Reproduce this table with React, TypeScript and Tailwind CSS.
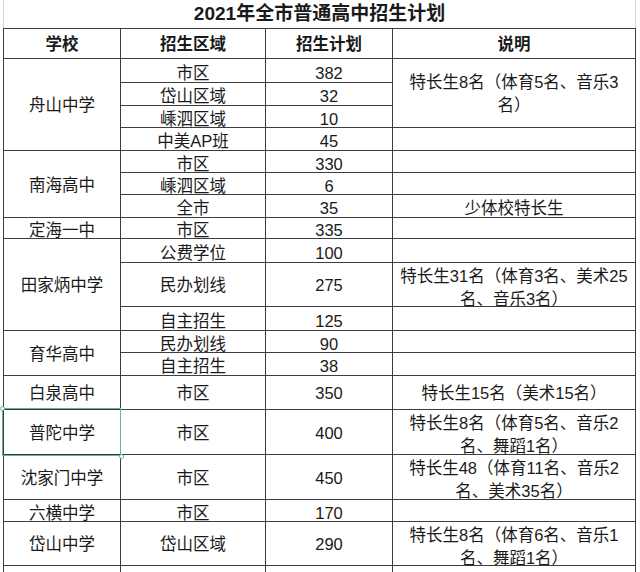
import type { ReactNode } from "react";

const FONT = { fontFamily: '"Liberation Sans", "Noto Sans CJK SC", sans-serif' };

// vertical nudge classes: text in the sheet sits a bit low in short rows
const MID = "pt-[2px]";
const LOW = "pt-[5px]";
const TWO = "pt-[6px]";

type CellProps = {
  children?: ReactNode;
  span?: string;
  pad?: string;
  bold?: boolean;
};

const Cell = ({ children, span = "", pad = MID, bold = false }: CellProps) => (
  <div
    className={`flex items-center justify-center overflow-hidden bg-white text-center whitespace-nowrap leading-[23px] text-[#1a1a1a] ${span} ${pad} ${
      bold ? "font-bold" : ""
    }`}
  >
    <span>{children}</span>
  </div>
);

export default function App() {
  return (
    <div className="relative h-[572px] w-[640px] overflow-hidden bg-white text-[16.5px]" style={FONT}>
      <div className="pl-[3px]">
        {/* title row */}
        <div className="flex h-[28px] w-[633px] items-center justify-center border-x border-[#d4d4d4] pt-[1px] text-[19px] font-bold text-[#1a1a1a]">
          2021年全市普通高中招生计划
        </div>

        {/* table */}
        <div className="grid w-[633px] grid-cols-[116px_144px_126px_242px] grid-rows-[29px_23px_22px_21px_22px_21px_21px_22px_20px_23px_43px_23px_21px_22px_33px_44px_44px_21px_43px_43px] gap-px bg-[#3d3d3d] p-px">
          <Cell bold>学校</Cell>
          <Cell bold>招生区域</Cell>
          <Cell bold>招生计划</Cell>
          <Cell bold>说明</Cell>

          {/* 舟山中学 */}
          <Cell span="row-span-4">舟山中学</Cell>
          <Cell pad={LOW}>市区</Cell>
          <Cell pad={LOW}>382</Cell>
          <Cell span="row-span-3" pad={MID}>
            特长生8名（体育5名、音乐3
            <br />
            名）
          </Cell>
          <Cell pad={LOW}>岱山区域</Cell>
          <Cell pad={LOW}>32</Cell>
          <Cell pad={LOW}>嵊泗区域</Cell>
          <Cell pad={LOW}>10</Cell>
          <Cell pad={LOW}>中美AP班</Cell>
          <Cell pad={LOW}>45</Cell>
          <Cell />

          {/* 南海高中 */}
          <Cell span="row-span-3">南海高中</Cell>
          <Cell pad={LOW}>市区</Cell>
          <Cell pad={LOW}>330</Cell>
          <Cell />
          <Cell pad={LOW}>嵊泗区域</Cell>
          <Cell pad={LOW}>6</Cell>
          <Cell />
          <Cell pad={LOW}>全市</Cell>
          <Cell pad={LOW}>35</Cell>
          <Cell pad={LOW}>少体校特长生</Cell>

          {/* 定海一中 */}
          <Cell pad={LOW}>定海一中</Cell>
          <Cell pad={LOW}>市区</Cell>
          <Cell pad={LOW}>335</Cell>
          <Cell />

          {/* 田家炳中学 */}
          <Cell span="row-span-3">田家炳中学</Cell>
          <Cell pad={LOW}>公费学位</Cell>
          <Cell pad={LOW}>100</Cell>
          <Cell />
          <Cell>民办划线</Cell>
          <Cell>275</Cell>
          <Cell pad={TWO}>
            特长生31名（体育3名、美术25
            <br />
            名、音乐3名）
          </Cell>
          <Cell pad={LOW}>自主招生</Cell>
          <Cell pad={LOW}>125</Cell>
          <Cell />

          {/* 育华高中 */}
          <Cell span="row-span-2">育华高中</Cell>
          <Cell pad={LOW}>民办划线</Cell>
          <Cell pad={LOW}>90</Cell>
          <Cell />
          <Cell pad={LOW}>自主招生</Cell>
          <Cell pad={LOW}>38</Cell>
          <Cell />

          {/* single-row schools */}
          <Cell>白泉高中</Cell>
          <Cell>市区</Cell>
          <Cell>350</Cell>
          <Cell>特长生15名（美术15名）</Cell>

          <Cell>普陀中学</Cell>
          <Cell>市区</Cell>
          <Cell>400</Cell>
          <Cell pad={TWO}>
            特长生8名（体育5名、音乐2
            <br />
            名、舞蹈1名）
          </Cell>

          <Cell>沈家门中学</Cell>
          <Cell>市区</Cell>
          <Cell>450</Cell>
          <Cell pad={TWO}>
            特长生48（体育11名、音乐2
            <br />
            名、美术35名）
          </Cell>

          <Cell pad={LOW}>六横中学</Cell>
          <Cell pad={LOW}>市区</Cell>
          <Cell pad={LOW}>170</Cell>
          <Cell />

          <Cell>岱山中学</Cell>
          <Cell>岱山区域</Cell>
          <Cell>290</Cell>
          <Cell pad={TWO}>
            特长生8名（体育6名、音乐1
            <br />
            名、舞蹈1名）
          </Cell>

          <Cell />
          <Cell />
          <Cell />
          <Cell />
        </div>
      </div>

      {/* selected cell outline */}
      <div className="absolute left-[2px] top-[408px] h-[48px] w-[119px] border-[1.5px] border-[#5bb98a]" />
      <div className="absolute left-0 top-[406px] h-[5px] w-[5px] rounded-full border border-[#5bb98a] bg-white" />
      <div className="absolute left-[119px] top-[454px] h-[5px] w-[5px] rounded-full border border-[#5bb98a] bg-white" />
    </div>
  );
}
